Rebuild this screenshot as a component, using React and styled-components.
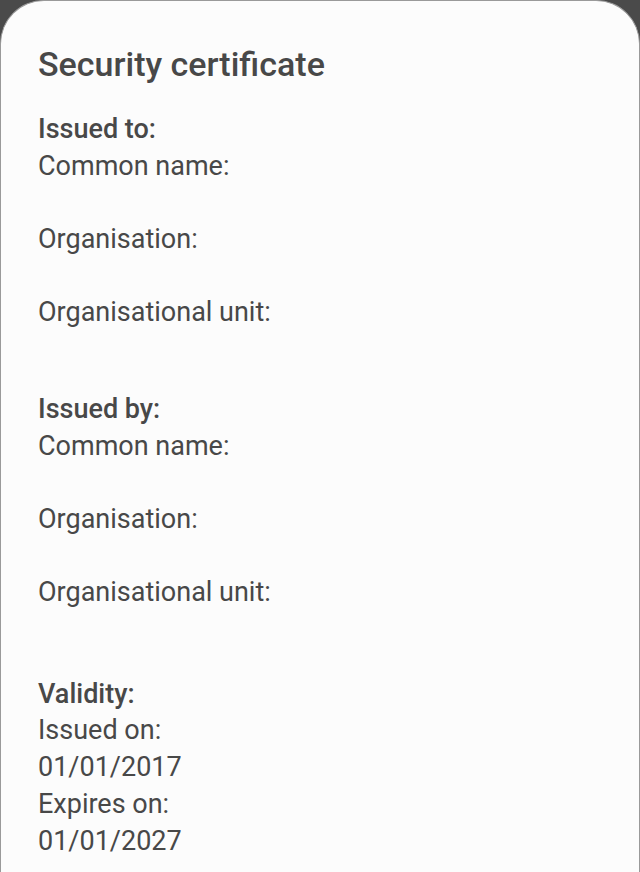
import React from 'react';
import styled, { createGlobalStyle } from 'styled-components';

const Global = createGlobalStyle`
  html, body { margin: 0; padding: 0; background: #4a4a4a; }
  body { font-family: Roboto, "Noto Sans", sans-serif; -webkit-font-smoothing: antialiased; }
`;

const Sheet = styled.div`
  box-sizing: border-box;
  width: 640px; min-height: 872px;
  background: #fcfcfc;
  border: 1px solid #9a9a9a; border-bottom: none;
  border-radius: 44px 44px 0 0;
  padding: 41px 38px 0 37px;
  color: #484848;
`;
const Title = styled.h1`
  margin: 0 0 25px 0;
  font-size: 34px; line-height: 44px; font-weight: 500;
  letter-spacing: 0;
`;
const Section = styled.section`
  margin-bottom: ${p => p.$gap || 24}px;
`;
const Heading = styled.div`
  font-size: 27px; line-height: 36.7px; font-weight: 500;
`;
const Line = styled.div`
  font-size: 27px; line-height: 36.7px; font-weight: 400;
  min-height: 36.7px;
`;

const Field = ({ label, value }) => <>
  <Line>{label}</Line>
  <Line>{value}</Line>
</>;

const fields = ['Common name:', 'Organisation:', 'Organisational unit:'];

export default function App() {
  return <>
    <Global />
    <Sheet>
      <Title>Security certificate</Title>
      <Section $gap={23}>
        <Heading>Issued to:</Heading>
        {fields.map(f => <Field key={f} label={f} value='' />)}
      </Section>
      <Section $gap={28}>
        <Heading>Issued by:</Heading>
        {fields.map(f => <Field key={f} label={f} value='' />)}
      </Section>
      <Section>
        <Heading>Validity:</Heading>
        <Line>Issued on:</Line>
        <Line>01/01/2017</Line>
        <Line>Expires on:</Line>
        <Line>01/01/2027</Line>
      </Section>
    </Sheet>
  </>;
}
